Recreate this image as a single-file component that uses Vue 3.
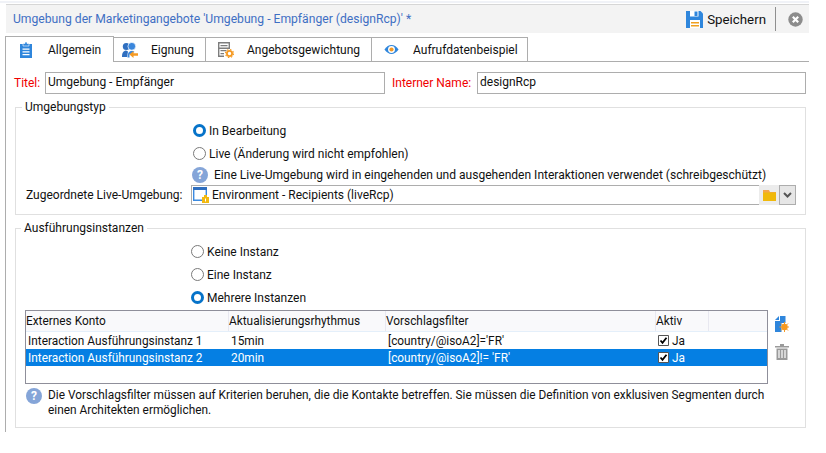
<template>
  <div class="page">
    <div class="topline"></div>
    <header class="titlebar">
      <span class="wintitle">Umgebung der Marketingangebote 'Umgebung - Empfänger (designRcp)' *</span>
      <button class="save">
        <svg width="17" height="17" viewBox="0 0 17 17">
          <path d="M0 0h14.500L17 2.500V17H0z" fill="#2f86dc" />
          <path d="M4 0h8.500v5.500H4z" fill="#fff" />
          <path d="M8.500 0.500h3v4.500h-3z" fill="#2f86dc" />
          <path d="M4 9h10v8H4z" fill="#fff" />
          <path d="M5 11h8v1.500H5zM5 14h8v1.500H5z" fill="#f0a020" />
        </svg>
        <span>Speichern</span>
      </button>
      <span class="sep"></span>
      <svg class="close" width="15" height="15" viewBox="0 0 15 15">
        <circle cx="7.500" cy="7.500" r="7.200" fill="#8c8c8c" />
        <path d="M4.800 4.800l5.400 5.400M10.200 4.800l-5.400 5.400" stroke="#fff" stroke-width="2.200" />
      </svg>
    </header>

    <nav class="tabs">
      <div class="tab active t1">
        <svg width="12" height="16" viewBox="0 0 12 16">
          <path d="M0 2h12v14H0z" fill="#2f86dc" />
          <path d="M3 1.500h2V0h2v1.500h2v2.500H3z" fill="#2f86dc" stroke="#fff" stroke-width=".6" />
          <path d="M2.500 6.500h7v1.200h-7zM2.500 9.300h7v1.200h-7zM2.500 12.100h7v1.200h-7z" fill="#fff" />
        </svg>
        <span class="tablabel l1">Allgemein</span>
      </div>
      <div class="tab t2">
        <svg width="16" height="16" viewBox="0 0 16 16">
          <circle cx="4.300" cy="4.500" r="3.500" fill="#2f6fc0" />
          <path d="M0 15c0-4 1-6 4-6.500l2 1L5 15z" fill="#2f6fc0" />
          <circle cx="9.800" cy="4.300" r="3.900" fill="#3b87dc" stroke="#fff" stroke-width=".7" />
          <path d="M5.500 15.500c0-4 1.200-6.500 4.300-6.500 1.300 0 2 .300 2.700 1L7.500 12.500V15.500z" fill="#3b87dc" />
          <path d="M7.500 12.500L11.500 9v2.200H16v2.600h-4.500V16z" fill="#f59a23" />
        </svg>
        <span class="tablabel l2">Eignung</span>
      </div>
      <div class="tab t3">
        <svg width="16" height="16" viewBox="0 0 16 16">
          <path d="M.700.700h10.600v5.600H.700zM.700 6.300v8h5.300" fill="none" stroke="#7d7d7d" stroke-width="1.400" />
          <path d="M2.500 3h7v1.300h-7zM2.500 8h6v1.300h-6zM2.500 11h3.500v1.300H2.500z" fill="#7d7d7d" />
          <circle cx="11.500" cy="11.500" r="2.600" fill="none" stroke="#f59a23" stroke-width="1.800" />
          <circle cx="11.500" cy="11.500" r="4" fill="none" stroke="#f59a23" stroke-width="1.100" stroke-dasharray="1.500 1.640" />
        </svg>
        <span class="tablabel l3">Angebotsgewichtung</span>
      </div>
      <div class="tab t4">
        <svg width="15" height="11" viewBox="0 0 17 12">
          <path d="M.500 6C3 2.500 5.500 1 8.500 1s5.500 1.500 8 5c-2.500 3.500-5 5-8 5s-5.500-1.500-8-5z" fill="#2f86dc" />
          <circle cx="8.500" cy="6" r="3.900" fill="#fff" />
          <circle cx="8.500" cy="6" r="2.400" fill="#f59a23" />
        </svg>
        <span class="tablabel l4">Aufrufdatenbeispiel</span>
      </div>
    </nav>

    <main class="panel">
      <div class="namerow">
        <label class="req tlabel">Titel:</label>
        <div class="input title">Umgebung - Empfänger</div>
        <label class="req iname">Interner Name:</label>
        <div class="input internal">designRcp</div>
      </div>

      <fieldset class="group first">
        <legend>Umgebungstyp</legend>
        <div class="options opt1">
          <div class="radio"><i class="dot on"></i>In Bearbeitung</div>
          <div class="radio"><i class="dot"></i>Live (Änderung wird nicht empfohlen)</div>
          <div class="hint">
            <i class="help">?</i>
            <span>Eine Live-Umgebung wird in eingehenden und ausgehenden Interaktionen verwendet (schreibgeschützt)</span>
          </div>
        </div>
        <div class="linkrow">
          <label>Zugeordnete Live-Umgebung:</label>
          <div class="linkinput">
            <svg width="16" height="16" viewBox="0 0 16 16">
              <path d="M.700.700h12.600v12.600H.700z" fill="#fff" stroke="#3b8ae0" stroke-width="1.400" />
              <path d="M0 0h14v3H0z" fill="#2f6fc0" />
              <path d="M9 10h7v6H9z" fill="#f2b90f" />
              <path d="M11 8h3v2h-3z" fill="#f2b90f" />
              <path d="M12 11.500h1v3h-1z" fill="#fff" />
            </svg>
            <span>Environment - Recipients (liveRcp)</span>
          </div>
          <div class="folderbtn">
            <svg width="13" height="11" viewBox="0 0 13 11">
              <path d="M0 0h6l1 2h6v2H0z" fill="#f3a64a" />
              <path d="M0 2.500h13V11H0z" fill="#f0b90b" />
            </svg>
          </div>
          <div class="dropbtn">
            <svg width="9" height="6" viewBox="0 0 9 6">
              <path d="M1 1l3.500 3.500L8 1" fill="none" stroke="#555" stroke-width="2" />
            </svg>
          </div>
        </div>
      </fieldset>

      <fieldset class="group second">
        <legend>Ausführungsinstanzen</legend>
        <div class="options opt2">
          <div class="radio"><i class="dot"></i>Keine Instanz</div>
          <div class="radio"><i class="dot"></i>Eine Instanz</div>
          <div class="radio"><i class="dot on"></i>Mehrere Instanzen</div>
        </div>
        <div class="tablerow">
          <div class="grid">
            <div class="row head">
              <div v-for="c in columns" :key="c.label" class="cell" :style="{ width: c.width + 'px' }">{{ c.label }}</div>
              <div class="cell rest"></div>
            </div>
            <div v-for="r in rows" :key="r.name" class="row" :class="{ selected: r.selected }">
              <div class="cell" :style="{ width: columns[0].width + 'px' }">{{ r.name }}</div>
              <div class="cell" :style="{ width: columns[1].width + 'px' }">{{ r.rate }}</div>
              <div class="cell" :style="{ width: columns[2].width + 'px' }">{{ r.filter }}</div>
              <div class="cell check" :style="{ width: columns[3].width + 'px' }">
                <svg class="box" width="11" height="11" viewBox="0 0 11 11">
                  <path d="M.500.500h10v10H.500z" fill="#fff" stroke="#555" />
                  <path d="M2.500 5.500l2 2.300 4-5" fill="none" stroke="#000" stroke-width="1.800" />
                </svg>
                Ja
              </div>
            </div>
          </div>
          <div class="tools">
            <svg width="14" height="16" viewBox="0 0 14 16">
              <path d="M5 0h5.500v7H6.500v9H0V5h5z" fill="#2f86dc" />
              <path d="M0 4l4-4v4z" fill="#2f86dc" />
              <circle cx="9.500" cy="11" r="3.200" fill="#f59a23" />
              <path d="M9.500 6v10M4.500 11h9.500M6 7.500l7 7M13 7.500l-7 7" stroke="#f59a23" stroke-width="1" />
            </svg>
            <svg class="trash" width="14" height="16" viewBox="0 0 14 16">
              <path d="M0 2h14v1.500H0zM5 0h4v2H5z" fill="#9a9a9a" />
              <path d="M1.500 4.500h11V16h-11z" fill="#9a9a9a" />
              <path d="M4 6v8M7 6v8M10 6v8" stroke="#fff" stroke-width="1.200" />
            </svg>
          </div>
        </div>
        <div class="note">
          <i class="help">?</i>
          <p>Die Vorschlagsfilter müssen auf Kriterien beruhen, die die Kontakte betreffen. Sie müssen die Definition von exklusiven Segmenten durch einen Architekten ermöglichen.</p>
        </div>
      </fieldset>
    </main>
  </div>
</template>

<script setup>
const columns = [
  { label: 'Externes Konto', width: 203 },
  { label: 'Aktualisierungsrhythmus', width: 157 },
  { label: 'Vorschlagsfilter', width: 270 },
  { label: 'Aktiv', width: 53 }
]

const rows = [
  { name: 'Interaction Ausführungsinstanz 1', rate: '15min', filter: "[country/@isoA2]='FR'" },
  { name: 'Interaction Ausführungsinstanz 2', rate: '20min', filter: "[country/@isoA2]!= 'FR'", selected: true }
]
</script>

<style>
html, body {
  margin: 0;
  background: #fff;
}
</style>

<style scoped>
.page {
  width: 826px;
  height: 453px;
  overflow: hidden;
  background: #fff;
  color: #111;
  font-family: Roboto, "Liberation Sans", sans-serif;
  font-size: 12px;
  box-sizing: border-box;
}

.topline {
  height: 2px;
  margin: 1px 17px 1px 0;
  background: #f0f2f7;
}

.titlebar {
  display: flex;
  align-items: center;
  width: 803px;
  height: 29px;
  margin-left: 6px;
  padding-left: 7px;
  box-sizing: border-box;
  background: #f3f3f3;
  border-top: 1px solid #d6d6d6;
}

.wintitle {
  flex: 1;
  color: #3f6fc3;
  font-size: 12.150px;
}

.save {
  display: flex;
  align-items: center;
  gap: 4px;
  padding: 0;
  border: 0;
  background: none;
  color: #111;
  font: inherit;
  font-size: 13.300px;
}

.sep {
  width: 1px;
  height: 24px;
  margin: 0 12px 0 9px;
  background: #8f8f8f;
}

.close {
  margin-right: 6px;
}

.tabs {
  display: flex;
  margin: 3px 0 0 5px;
  width: 804px;
  height: 26px;
  box-sizing: border-box;
  border-bottom: 1px solid #adadad;
}

.tab {
  display: flex;
  align-items: center;
  height: 24px;
  margin-top: 1px;
  box-sizing: border-box;
  border: 1px solid #adadad;
  border-left: 0;
  border-bottom: 0;
  background: #fff;
}

.tab.active {
  height: 26px;
  margin-top: 0;
  border-left: 1px solid #adadad;
}

.t1 { width: 109px; padding-left: 14px; }
.t2 { width: 92px; padding-left: 8px; }
.t3 { width: 166px; padding-left: 12px; }
.t4 { width: 156px; padding-left: 12px; }

.l1 { margin-left: 16px; }
.l2 { margin-left: 13px; }
.l3 { margin-left: 13px; }
.l4 { margin-left: 14px; }

.panel {
  margin-left: 5px;
  width: 804px;
  height: 370px;
  box-sizing: border-box;
  border-left: 1px solid #adadad;
  padding: 10px 0 0 9px;
}

.namerow {
  display: flex;
  align-items: center;
  height: 22px;
  margin-left: -1px;
  white-space: nowrap;
}

.req {
  color: #f00000;
}

.tlabel {
  width: 31px;
}

.input {
  height: 22px;
  box-sizing: border-box;
  border: 1px solid #adadad;
  padding-left: 2px;
  line-height: 19px;
}

.input.title {
  width: 340px;
}

.iname {
  width: 92px;
  padding-left: 7px;
  box-sizing: border-box;
}

.input.internal {
  width: 329px;
}

.group {
  width: 791px;
  margin: 5px 0 0;
  padding: 0;
  box-sizing: border-box;
  border: 1px solid #e0e0e0;
}

.group legend {
  margin-left: 6px;
  padding: 0 3px;
  line-height: 16px;
}

.group.first {
  height: 116px;
}

.group.second {
  height: 208px;
}

.group.second legend {
  margin-left: 5px;
}

.options {
  display: flex;
  flex-direction: column;
}

.opt1 { padding: 4px 0 0 177px; }
.opt2 { padding: 4px 0 0 175px; }

.radio {
  display: flex;
  align-items: center;
  height: 23px;
}

.dot {
  width: 13px;
  height: 13px;
  margin-right: 3px;
  box-sizing: border-box;
  border: 1px solid #7a7a7a;
  border-radius: 50%;
  background: #fff;
}

.dot.on {
  border: 3px solid #0673c9;
}

.hint {
  display: flex;
  align-items: center;
  height: 19px;
  gap: 6px;
  margin-left: -1px;
  white-space: nowrap;
  font-size: 12.050px;
}

.help {
  display: inline-flex;
  align-items: center;
  justify-content: center;
  width: 16px;
  height: 16px;
  flex: none;
  border-radius: 50%;
  background: #85a5d8;
  color: #fff;
  font-style: normal;
  font-weight: 700;
  font-size: 12px;
}

.linkrow {
  display: flex;
  align-items: center;
  height: 20px;
  margin-top: 1px;
  padding-left: 10px;
  white-space: nowrap;
}

.linkrow label {
  width: 165px;
}

.linkinput {
  display: flex;
  align-items: center;
  gap: 3px;
  width: 568px;
  height: 20px;
  box-sizing: border-box;
  border: 1px solid #adadad;
  border-right: 0;
  padding-left: 1px;
}

.folderbtn {
  display: flex;
  align-items: center;
  justify-content: center;
  width: 20px;
  height: 20px;
  background: #ececec;
}

.dropbtn {
  display: flex;
  align-items: center;
  justify-content: center;
  width: 17px;
  height: 20px;
  box-sizing: border-box;
  border: 1px solid #adadad;
  background: #e6e6e6;
}

.tablerow {
  display: flex;
  margin-top: 1px;
  padding-left: 9px;
}

.grid {
  width: 743px;
  height: 74px;
  box-sizing: border-box;
  border: 1px solid #8f8f9a;
  background: #fff;
  font-size: 11.850px;
}

.row {
  display: flex;
  align-items: center;
  height: 17px;
}

.row .cell {
  padding-left: 2px;
  box-sizing: border-box;
  white-space: nowrap;
}

.row.head {
  height: 21px;
  background: #f9f9fb;
  border-bottom: 1px solid #e4effa;
  box-sizing: border-box;
}

.row.head .cell {
  height: 100%;
  line-height: 20px;
  padding-left: 0;
  border-right: 1px solid #e8e8f0;
}

.row.head .cell.rest {
  flex: 1;
  border-right: 0;
}

.row.selected {
  background: #057fe3;
  color: #fff;
}

.check {
  display: flex;
  align-items: center;
}

.box {
  margin-right: 3px;
}

.tools {
  display: flex;
  flex-direction: column;
  align-items: center;
  width: 14px;
  margin-left: 7px;
  padding-top: 6px;
}

.trash {
  margin-top: 12px;
}

.note {
  display: flex;
  gap: 6px;
  margin-top: 4px;
  padding-left: 10px;
  font-size: 11.870px;
}

.note p {
  margin: 0;
  width: 725px;
  line-height: 15px;
}
</style>
